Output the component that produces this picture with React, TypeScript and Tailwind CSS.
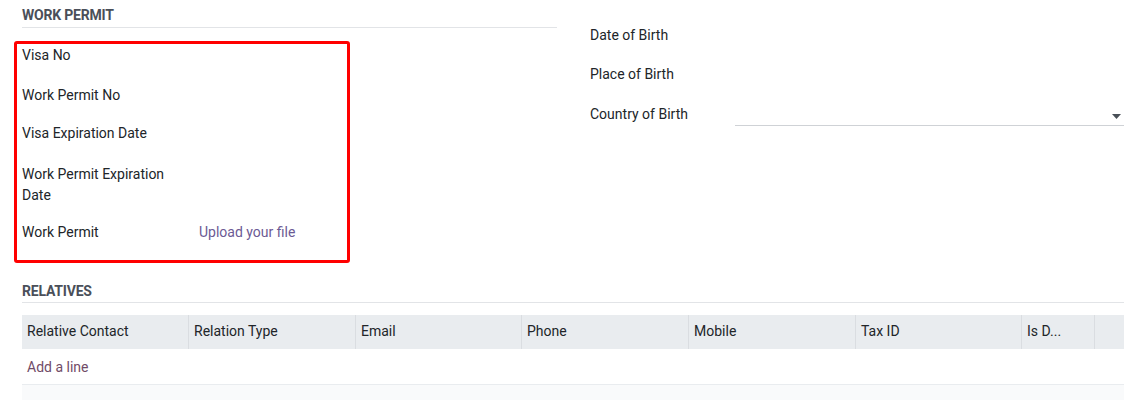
import React from 'react';

const permitRows = [
    { label: 'Visa No', mb: 'mb-[19px]' },
    { label: 'Work Permit No', mb: 'mb-[17px]' },
    { label: 'Visa Expiration Date', mb: 'mb-[20px]' },
    { label: 'Work Permit Expiration Date', mb: 'mb-[16px]' },
    { label: 'Work Permit', value: 'Upload your file', mb: 'mb-0' },
];

const birthRows = [
    { label: 'Date of Birth', mb: 'mb-[18px]' },
    { label: 'Place of Birth', mb: 'mb-[19px]' },
];

const columns = [
    { name: 'Relative Contact', w: 'w-[167px]' },
    { name: 'Relation Type', w: 'w-[167px]' },
    { name: 'Email', w: 'w-[166px]' },
    { name: 'Phone', w: 'w-[167px]' },
    { name: 'Mobile', w: 'w-[167px]' },
    { name: 'Tax ID', w: 'w-[166px]' },
    { name: 'Is D...', w: 'w-[73px]' },
];

const App: React.FC = () => {
    return (
        <div className="w-[1142px] h-[400px] overflow-hidden bg-white font-['Roboto','Liberation_Sans',sans-serif] text-[14px] leading-[21px] text-[#212529]">
            {/* Work permit + birth */}
            <div className="flex pl-[14px]">
                <div className="w-[543px]">
                    <div className="ml-[8px] pt-[4.5px] pb-[1px] border-b border-[#e2e4e7] font-bold text-[#4a4f59] tracking-[-0.2px]">
                        WORK PERMIT
                    </div>
                    <div className="mt-[13px] w-[336px] border-[3px] border-[#ff0000] rounded-[3px] pl-[5px] pt-[1.5px] pb-[16.5px]">
                        {permitRows.map((row) => (
                            <div key={row.label} className={`flex ${row.mb}`}>
                                <div className="w-[177px] pr-[16px]">{row.label}</div>
                                {row.value && <div className="text-[#6c5a94]">{row.value}</div>}
                            </div>
                        ))}
                    </div>
                </div>

                <div className="ml-[33px] w-[534px] pt-[24.5px]">
                    {birthRows.map((row) => (
                        <div key={row.label} className={row.mb}>{row.label}</div>
                    ))}
                    <div className="flex">
                        <div className="w-[145px]">Country of Birth</div>
                        <div className="flex-1 h-[22px] border-b border-[#cfd2d6] flex items-center justify-end pr-[3px]">
                            <svg width="9" height="5" viewBox="0 0 9 5" className="mt-[4px]">
                                <path d="M0 0 H9 L4.5 5 Z" fill="#495057" />
                            </svg>
                        </div>
                    </div>
                </div>
            </div>

            {/* Relatives */}
            <div className="mt-[18px] ml-[22px] w-[1102px]">
                <div className="border-b border-[#e2e4e7] font-bold text-[#4a4f59] tracking-[-0.2px]">
                    RELATIVES
                </div>
                <div className="mt-[12px] flex h-[34px] bg-[#e9ecef]">
                    {columns.map((col) => (
                        <div key={col.name} className={`${col.w} border-r border-[#dadde1] pl-[5px] flex items-center`}>
                            {col.name}
                        </div>
                    ))}
                    <div className="flex-1" />
                </div>
                <div className="h-[36px] border-b border-[#e9ecef] pl-[5px] pt-[2px] flex items-center text-[#714b67]">
                    Add a line
                </div>
                <div className="h-[40px] bg-[#f9fafb]" />
            </div>
        </div>
    );
};

export default App;
